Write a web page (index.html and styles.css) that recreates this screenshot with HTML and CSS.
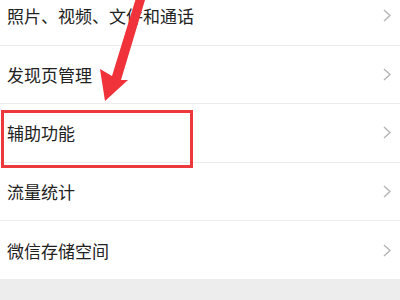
FILE: index.html
```html
<!DOCTYPE html>
<html lang="zh-CN">
<head>
<meta charset="utf-8">
<link rel="stylesheet" href="styles.css">
</head>
<body>
<div class="screen">
  <ul class="list">
    <li class="row"><span class="label">照片、视频、文件和通话</span><svg class="chev" viewBox="0 0 8 13" width="8" height="13"><polyline points="1,1 7,6.5 1,12"/></svg></li>
    <li class="row"><span class="label">发现页管理</span><svg class="chev" viewBox="0 0 8 13" width="8" height="13"><polyline points="1,1 7,6.5 1,12"/></svg></li>
    <li class="row"><span class="label">辅助功能</span><svg class="chev" viewBox="0 0 8 13" width="8" height="13"><polyline points="1,1 7,6.5 1,12"/></svg></li>
    <li class="row"><span class="label">流量统计</span><svg class="chev" viewBox="0 0 8 13" width="8" height="13"><polyline points="1,1 7,6.5 1,12"/></svg></li>
    <li class="row last"><span class="label">微信存储空间</span><svg class="chev" viewBox="0 0 8 13" width="8" height="13"><polyline points="1,1 7,6.5 1,12"/></svg></li>
  </ul>
  <div class="footer"></div>
  <div class="highlight"></div>
  <svg class="arrow" viewBox="0 0 400 300" width="400" height="300">
    <polygon points="136,-2 145,0 121,80 128,80 105,101 100,69 112,76" fill="#f0323a"/>
  </svg>
</div>
</body>
</html>
```
FILE: styles.css
```css
html, body {
  margin: 0;
  padding: 0;
  background: #ffffff;
}
.screen {
  position: relative;
  width: 400px;
  height: 300px;
  overflow: hidden;
  background: #ededed;
  font-family: "Noto Sans CJK SC", "Noto Sans", sans-serif;
}
.list {
  list-style: none;
  margin: -13px 0 0 0;
  padding: 0;
  background: #ffffff;
}
.row {
  display: flex;
  align-items: center;
  justify-content: space-between;
  height: 57.5px;
  padding: 0 9px 0 7px;
  border-bottom: 1px solid #ececec;
}
.row.last {
  border-bottom: none;
  height: 58px;
}
.label {
  font-size: 17px;
  color: #222222;
  letter-spacing: 0;
}
.chev {
  fill: none;
  stroke: #b4b4b4;
  stroke-width: 1.4;
}
.footer {
  height: 40px;
  background: #ededed;
}
.highlight {
  position: absolute;
  left: 1px;
  top: 110px;
  width: 186px;
  height: 52px;
  border: 3px solid #ec3a3c;
}
.arrow {
  position: absolute;
  left: 0;
  top: 0;
}
```
